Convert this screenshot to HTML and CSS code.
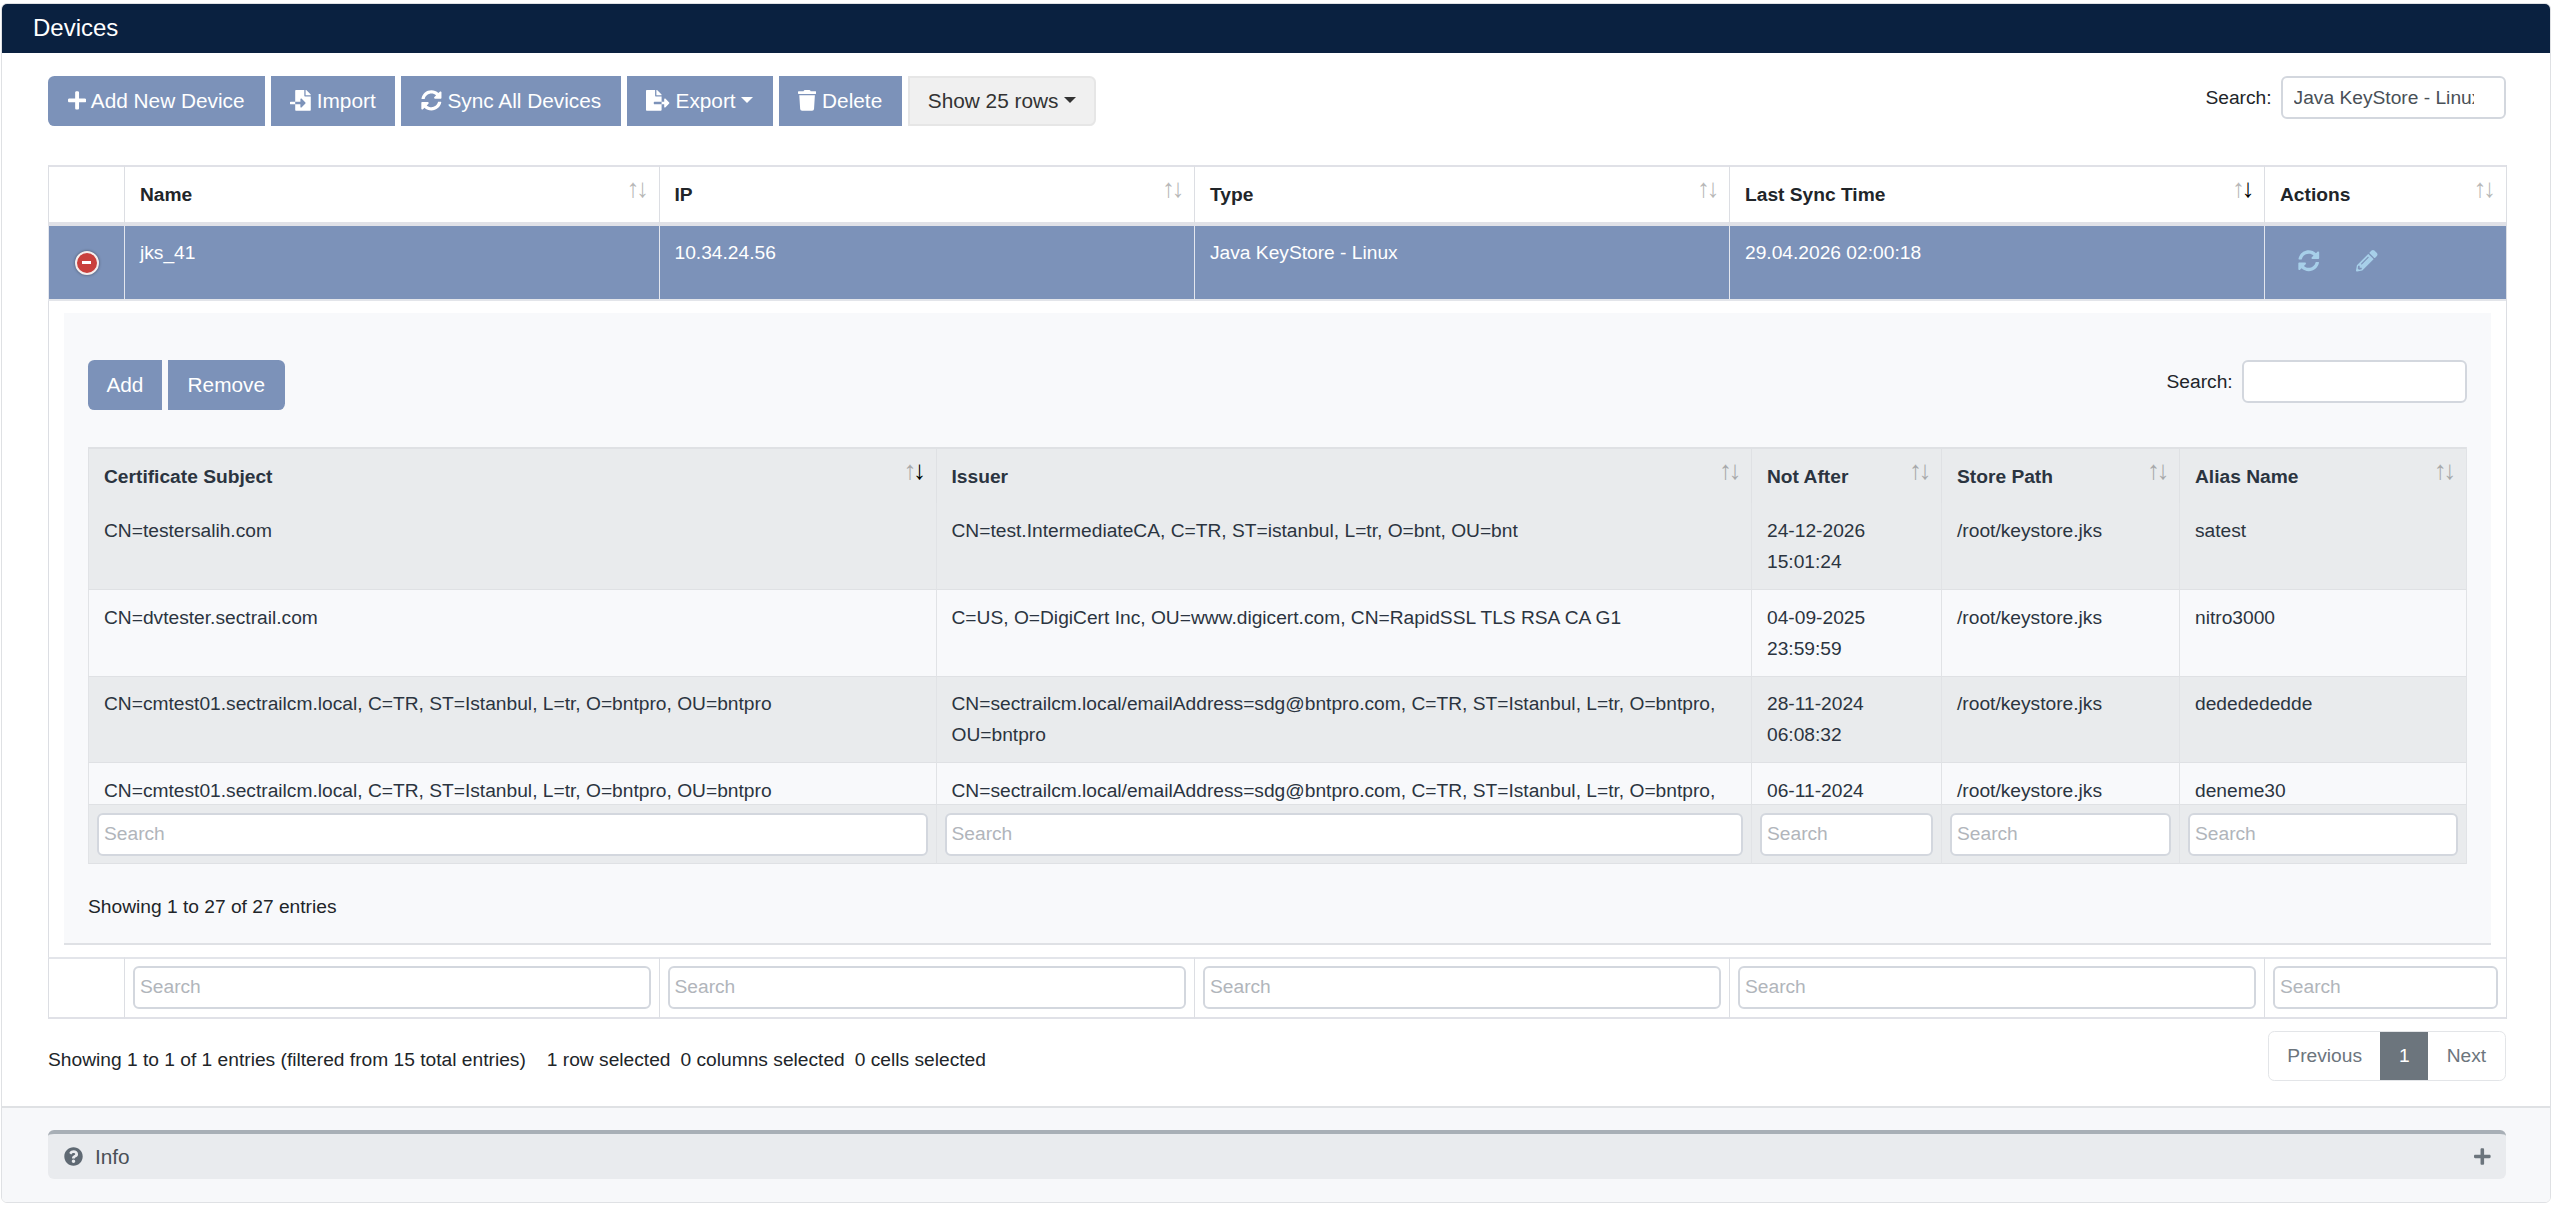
FILE: index.html
```html
<!DOCTYPE html>
<html lang="en">
<head>
    <meta charset="UTF-8">
    <title>Devices</title>
    <link rel="stylesheet" href="styles.css">
</head>
<body>
    <svg class="sprite" aria-hidden="true">
        <defs>
            <path id="i-plus" d="M416 208H272V64c0-17.670-14.330-32-32-32h-32c-17.670 0-32 14.330-32 32v144H32c-17.670 0-32 14.330-32 32v32c0 17.670 14.330 32 32 32h144v144c0 17.670 14.330 32 32 32h32c17.670 0 32-14.330 32-32V304h144c17.670 0 32-14.330 32-32v-32c0-17.670-14.330-32-32-32z"/>
            <path id="i-import" d="M16 288c-8.800 0-16 7.200-16 16v32c0 8.800 7.200 16 16 16h112v-64zm489-183L407.100 7c-4.500-4.500-10.600-7-17-7H384v128h128v-6.100c0-6.300-2.500-12.400-7-16.900zm-153 31V0H152c-13.300 0-24 10.700-24 24v264h128v-65.200c0-14.300 17.300-21.400 27.400-11.300L379 308c6.600 6.700 6.600 17.400 0 24l-95.700 96.400c-10.100 10.100-27.400 3-27.400-11.300V352H128v136c0 13.300 10.700 24 24 24h336c13.300 0 24-10.700 24-24V160H376c-13.200 0-24-10.800-24-24z"/>
            <path id="i-export" d="M384 121.900c0-6.300-2.500-12.400-7-16.900L279.100 7c-4.500-4.500-10.600-7-17-7H256v128h128zM571 308l-95.700-96.400c-10.100-10.100-27.400-3-27.400 11.300V288h-64v64h64v65.200c0 14.300 17.300 21.400 27.400 11.300L571 332c6.600-6.600 6.600-17.400 0-24zm-379 28v-32c0-8.800 7.200-16 16-16h176V160H248c-13.200 0-24-10.800-24-24V0H24C10.700 0 0 10.700 0 24v464c0 13.300 10.700 24 24 24h336c13.300 0 24-10.700 24-24V352H208c-8.800 0-16-7.200-16-16z"/>
            <path id="i-sync" d="M370.720 133.280C339.458 104.008 298.888 87.962 255.848 88c-77.458.068-144.328 53.178-162.791 126.850-1.344 5.363-6.122 9.150-11.651 9.150H24.103c-7.498 0-13.194-6.807-11.807-14.176C33.933 94.924 134.813 8 256 8c66.448 0 126.791 26.136 171.315 68.685L463.030 40.970C478.149 25.851 504 36.559 504 57.941V192c0 13.255-10.745 24-24 24H345.941c-21.382 0-32.090-25.851-16.971-40.971l41.750-41.749zM32 296h134.059c21.382 0 32.090 25.851 16.971 40.971l-41.750 41.750c31.262 29.273 71.835 45.319 114.876 45.280 77.418-.07 144.315-53.144 162.787-126.849 1.344-5.363 6.122-9.150 11.651-9.150h57.304c7.498 0 13.194 6.807 11.807 14.176C478.067 417.076 377.187 504 256 504c-66.448 0-126.791-26.136-171.315-68.685L48.970 471.030C33.851 486.149 8 475.441 8 454.059V320c0-13.255 10.745-24 24-24z"/>
            <path id="i-trash" d="M432 32H312l-9.400-18.700A24 24 0 0 0 281.100 0H166.800a23.720 23.720 0 0 0-21.400 13.300L136 32H16A16 16 0 0 0 0 48v32a16 16 0 0 0 16 16h416a16 16 0 0 0 16-16V48a16 16 0 0 0-16-16zM53.200 467a48 48 0 0 0 47.900 45h245.800a48 48 0 0 0 47.900-45L416 128H32z"/>
            <path id="i-pencil" d="M497.900 142.100l-46.100 46.100c-4.700 4.700-12.300 4.700-17 0l-111-111c-4.700-4.700-4.700-12.300 0-17l46.100-46.100c18.700-18.700 49.100-18.700 67.900 0l60.100 60.100c18.800 18.700 18.800 49.100 0 67.900zM284.200 99.800L21.600 362.400.4 483.900c-2.900 16.400 11.400 30.600 27.800 27.800l121.500-21.300 262.600-262.600c4.700-4.700 4.700-12.300 0-17l-111-111c-4.800-4.700-12.400-4.700-17.100 0zM124.100 339.900c-5.500-5.500-5.500-14.300 0-19.800l154-154c5.500-5.500 14.300-5.500 19.800 0s5.500 14.300 0 19.800l-154 154c-5.500 5.500-14.300 5.500-19.800 0zM88 424h48v36.300l-64.500 11.300-31.100-31.100L51.700 376H88v48z"/>
            <path id="i-question" d="M504 256c0 136.997-111.043 248-248 248S8 392.997 8 256C8 119.083 119.043 8 256 8s248 111.083 248 248zM262.655 90c-54.497 0-89.255 22.957-116.549 63.758-3.536 5.286-2.353 12.415 2.715 16.258l34.699 26.310c5.205 3.947 12.621 3.008 16.665-2.122 17.864-22.658 30.113-35.797 57.303-35.797 20.429 0 45.698 13.148 45.698 32.958 0 14.976-12.363 22.667-32.534 33.976C247.128 238.528 216 254.941 216 296v4c0 6.627 5.373 12 12 12h56c6.627 0 12-5.373 12-12v-1.333c0-28.462 83.186-29.647 83.186-106.667 0-58.002-60.165-102-116.531-102zM256 338c-25.365 0-46 20.635-46 46 0 25.364 20.635 46 46 46s46-20.636 46-46c0-25.365-20.635-46-46-46z"/>
        </defs>
    </svg>

    <div class="card">
        <div class="card-header">Devices</div>

        <div class="card-body">
            <div class="toolbar">
                <div class="btn-group">
                    <button class="btn btn-primary first"><svg class="icon" viewBox="0 0 448 512"><use href="#i-plus"/></svg> Add New Device</button>
                    <button class="btn btn-primary"><svg class="icon" viewBox="0 0 512 512"><use href="#i-import"/></svg> Import</button>
                    <button class="btn btn-primary"><svg class="icon" viewBox="0 0 512 512"><use href="#i-sync"/></svg> Sync All Devices</button>
                    <button class="btn btn-primary caret"><svg class="icon" viewBox="0 0 576 512"><use href="#i-export"/></svg> Export</button>
                    <button class="btn btn-primary"><svg class="icon" viewBox="0 0 448 512"><use href="#i-trash"/></svg> Delete</button>
                    <button class="btn btn-light last caret">Show 25 rows</button>
                </div>
                <label class="search">Search: <input class="search-input" type="text" value="Java KeyStore - Linux"></label>
            </div>

            <table class="main-table">
                <colgroup>
                    <col class="m1"><col class="m2"><col class="m3"><col class="m4"><col class="m5"><col class="m6">
                </colgroup>
                <thead>
                    <tr>
                        <th></th>
                        <th class="sort">Name</th>
                        <th class="sort">IP</th>
                        <th class="sort">Type</th>
                        <th class="sort sort-desc">Last Sync Time</th>
                        <th class="sort">Actions</th>
                    </tr>
                </thead>
                <tbody>
                    <tr class="selected">
                        <td class="control"><span class="remove-btn"></span></td>
                        <td>jks_41</td>
                        <td>10.34.24.56</td>
                        <td>Java KeyStore - Linux</td>
                        <td>29.04.2026 02:00:18</td>
                        <td class="actions">
                            <svg class="icon" viewBox="0 0 512 512"><use href="#i-sync"/></svg>
                            <svg class="icon" viewBox="0 0 512 512"><use href="#i-pencil"/></svg>
                        </td>
                    </tr>
                    <tr class="child-row">
                        <td colspan="6">
                            <div class="child-panel">
                                <div class="toolbar child-toolbar">
                                    <div class="btn-group">
                                        <button class="btn btn-primary first">Add</button>
                                        <button class="btn btn-primary last">Remove</button>
                                    </div>
                                    <label class="search">Search: <input class="search-input" type="text"></label>
                                </div>

                                <div class="scroll-body">
                                    <table class="child-table">
                                        <colgroup>
                                            <col class="c1"><col class="c2"><col class="c3"><col class="c4"><col class="c5">
                                        </colgroup>
                                        <thead>
                                            <tr>
                                                <th class="sort sort-desc">Certificate Subject</th>
                                                <th class="sort">Issuer</th>
                                                <th class="sort">Not After</th>
                                                <th class="sort">Store Path</th>
                                                <th class="sort">Alias Name</th>
                                            </tr>
                                        </thead>
                                        <tbody>
                                            <tr class="odd">
                                                <td>CN=testersalih.com</td>
                                                <td>CN=test.IntermediateCA, C=TR, ST=istanbul, L=tr, O=bnt, OU=bnt</td>
                                                <td>24-12-2026 15:01:24</td>
                                                <td>/root/keystore.jks</td>
                                                <td>satest</td>
                                            </tr>
                                            <tr>
                                                <td>CN=dvtester.sectrail.com</td>
                                                <td>C=US, O=DigiCert Inc, OU=www.digicert.com, CN=RapidSSL TLS RSA CA G1</td>
                                                <td>04-09-2025 23:59:59</td>
                                                <td>/root/keystore.jks</td>
                                                <td>nitro3000</td>
                                            </tr>
                                            <tr class="odd">
                                                <td>CN=cmtest01.sectrailcm.local, C=TR, ST=Istanbul, L=tr, O=bntpro, OU=bntpro</td>
                                                <td>CN=sectrailcm.local/emailAddress=sdg@bntpro.com, C=TR, ST=Istanbul, L=tr, O=bntpro, OU=bntpro</td>
                                                <td>28-11-2024 06:08:32</td>
                                                <td>/root/keystore.jks</td>
                                                <td>dededededde</td>
                                            </tr>
                                            <tr>
                                                <td>CN=cmtest01.sectrailcm.local, C=TR, ST=Istanbul, L=tr, O=bntpro, OU=bntpro</td>
                                                <td>CN=sectrailcm.local/emailAddress=sdg@bntpro.com, C=TR, ST=Istanbul, L=tr, O=bntpro, OU=bntpro</td>
                                                <td>06-11-2024</td>
                                                <td>/root/keystore.jks</td>
                                                <td>deneme30</td>
                                            </tr>
                                        </tbody>
                                    </table>
                                </div>

                                <table class="child-table child-filters">
                                    <colgroup>
                                        <col class="c1"><col class="c2"><col class="c3"><col class="c4"><col class="c5">
                                    </colgroup>
                                    <tfoot>
                                        <tr>
                                            <td><input class="filter-input" placeholder="Search"></td>
                                            <td><input class="filter-input" placeholder="Search"></td>
                                            <td><input class="filter-input" placeholder="Search"></td>
                                            <td><input class="filter-input" placeholder="Search"></td>
                                            <td><input class="filter-input" placeholder="Search"></td>
                                        </tr>
                                    </tfoot>
                                </table>

                                <div class="child-info">Showing 1 to 27 of 27 entries</div>
                            </div>
                        </td>
                    </tr>
                </tbody>
                <tfoot>
                    <tr>
                        <td></td>
                        <td><input class="filter-input" placeholder="Search"></td>
                        <td><input class="filter-input" placeholder="Search"></td>
                        <td><input class="filter-input" placeholder="Search"></td>
                        <td><input class="filter-input" placeholder="Search"></td>
                        <td><input class="filter-input" placeholder="Search"></td>
                    </tr>
                </tfoot>
            </table>

            <div class="table-footer">
                <div class="table-info">Showing 1 to 1 of 1 entries (filtered from 15 total entries)<span class="select-info">1 row selected</span><span class="select-item">0 columns selected</span><span class="select-item">0 cells selected</span></div>
                <ul class="pagination">
                    <li class="page-item">Previous</li>
                    <li class="page-item active">1</li>
                    <li class="page-item">Next</li>
                </ul>
            </div>
        </div>

        <div class="card-footer">
            <div class="info-panel">
                <svg class="icon info-icon" viewBox="0 0 512 512"><use href="#i-question"/></svg>
                <span class="info-title">Info</span>
                <svg class="icon info-plus" viewBox="0 0 448 512"><use href="#i-plus"/></svg>
            </div>
        </div>
    </div>
</body>
</html>
```

FILE: styles.css
```css
* {
    box-sizing: border-box;
}
body {
    margin: 3px 5px 0 1px;
    font-family: "Liberation Sans", Arial, sans-serif;
    font-size: 19.2px;
    line-height: 1.6;
    color: #212529;
    background: #fff;
    overflow: hidden;
}
.sprite {
    position: absolute;
    width: 0;
    height: 0;
}
.icon {
    height: 1em;
    width: auto;
    fill: currentColor;
    vertical-align: -0.125em;
}

/* card */
.card {
    height: 1200px;
    border: 1px solid #dfe1e4;
    border-radius: 6px;
    overflow: hidden;
    display: flex;
    flex-direction: column;
}
.card-header {
    height: 49px;
    flex: none;
    padding: 0 31px;
    display: flex;
    align-items: center;
    font-size: 24px;
    color: #fff;
    background: #0a2140;
}
.card-body {
    height: 1053px;
    flex: none;
    padding: 23px 44.4px 0 46px;
}
.card-footer {
    flex: 1;
    padding: 22px 44.4px 0 46px;
    background: #f7f8fa;
    border-top: 2px solid #dfe1e4;
}

/* toolbars */
.toolbar {
    display: flex;
    justify-content: space-between;
    align-items: flex-start;
    margin-bottom: 39px;
}
.btn-group {
    display: flex;
    gap: 6px;
}
.btn {
    height: 50px;
    padding: 0 19.6px;
    border: none;
    font-family: inherit;
    font-size: 20.8px;
    line-height: 1.5;
    white-space: nowrap;
}
.btn-primary {
    color: #fff;
    background: #7c92b9;
}
.btn-primary.first {
    padding: 0 20px;
}
.child-toolbar .btn-primary.first {
    padding: 0 18.4px;
}
.child-toolbar .btn-primary.last {
    padding: 0 19.8px;
}
.btn-light {
    padding: 0 18px;
    color: #333;
    background: #f0f0f0;
    border: 2px solid #e6e6e6;
}
.first {
    border-radius: 6.4px 0 0 6.4px;
}
.last {
    border-radius: 0 6.4px 6.4px 0;
}
.caret::after {
    content: "";
    display: inline-block;
    margin-left: 0.255em;
    vertical-align: 0.255em;
    border-top: 0.3em solid;
    border-right: 0.3em solid transparent;
    border-left: 0.3em solid transparent;
}
.search {
    display: flex;
    align-items: flex-start;
    gap: 9px;
    line-height: 44px;
}
.search-input {
    width: 225px;
    height: 43px;
    padding: 0 30px 0 11px;
    border: 2px solid #d3d7de;
    border-radius: 6px;
    background: #fff;
    font-family: inherit;
    font-size: 19.2px;
    color: #495057;
}
.filter-input {
    display: block;
    width: 100%;
    height: 43px;
    padding: 0 5px;
    border: 2px solid #d3d7de;
    border-radius: 6px;
    background: #fff;
    font-family: inherit;
    font-size: 19.2px;
}
.filter-input::placeholder {
    color: #b1b5bb;
    opacity: 1;
}

/* main table */
table {
    width: 100%;
    table-layout: fixed;
    border-collapse: separate;
    border-spacing: 0;
}
.m1 { width: 76px; }
.m2 { width: 534.5px; }
.m3 { width: 535.5px; }
.m4 { width: 535px; }
.m5 { width: 535px; }
.m6 { width: 241.6px; }
.main-table {
    border-right: 1px solid #dcdee3;
}
.main-table > thead th {
    position: relative;
    padding: 13px 15px 11px;
    text-align: left;
    font-weight: 700;
    border-top: 2px solid #e0e1e7;
    border-left: 1px solid #dcdee3;
    border-bottom: 4px solid #e0e1e7;
}
.main-table > tbody > .selected > td {
    height: 75px;
    padding: 12px 15px;
    vertical-align: top;
    color: #fff;
    background: #7c92b9;
    border-left: 1px solid #e3e6ee;
    border-bottom: 2px solid #e3e5ea;
}
.main-table > tbody > .selected > .control {
    padding: 0;
    vertical-align: middle;
    text-align: center;
}
.remove-btn {
    display: block;
    position: relative;
    width: 24px;
    height: 24px;
    margin: 2px auto 0;
    border: 2.5px solid #f4eeee;
    border-radius: 50%;
    background: #c9403d;
    box-shadow: 0 0 3px rgba(0, 0, 0, 0.45);
}
.remove-btn::after {
    content: "";
    position: absolute;
    left: 5px;
    top: 7.5px;
    width: 9px;
    height: 3px;
    background: #fff;
}
.main-table > tbody > .selected > .actions {
    padding: 0 0 0 33px;
    vertical-align: middle;
    color: #a7cfe9;
    font-size: 21.5px;
}
.actions .icon {
    margin-right: 31px;
}
.main-table > tbody > .child-row > td {
    padding: 12px 14.6px 12px 15px;
    border-left: 1px solid #dcdee3;
}
.main-table > tfoot td {
    padding: 7px 8px 8px;
    border-top: 2px solid #e3e5ea;
    border-left: 1px solid #dcdee3;
    border-bottom: 2px solid #e0e1e7;
}

/* sort arrows */
.sort::before,
.sort::after {
    position: absolute;
    top: 6px;
    font-size: 26px;
    font-weight: 400;
    line-height: 30px;
    color: #000;
    opacity: 0.28;
}
.sort::before {
    content: "\2191";
    right: 19px;
}
.sort::after {
    content: "\2193";
    right: 9.5px;
}
.sort-desc::after {
    opacity: 1;
}

/* child panel */
.child-panel {
    height: 632px;
    padding: 47px 24.3px 0 24px;
    background: #f8f9fb;
    border-bottom: 2px solid #dfe1e5;
}
.child-toolbar {
    margin-bottom: 37px;
}
.scroll-body {
    height: 357px;
    overflow: hidden;
}
.c1 { width: 847.5px; }
.c2 { width: 815.5px; }
.c3 { width: 190px; }
.c4 { width: 238px; }
.c5 { width: 286.7px; }
.child-table {
    border-right: 1px solid #e1e3e6;
    color: #2b3440;
}
.child-table th {
    position: relative;
    padding: 13px 15px 11px;
    text-align: left;
    font-weight: 700;
    background: #e9ebed;
    border-top: 2px solid #dfe1e4;
    border-left: 1px solid #dfe1e4;
}
.child-table tbody td {
    height: 86.6px;
    padding: 12.8px 15px 10.9px;
    vertical-align: top;
    border-left: 1px solid #e1e3e6;
    border-bottom: 1.5px solid #dfe1e4;
}
.child-table .odd td {
    background: #e9ebed;
}
.child-filters td {
    padding: 8px 8px 7px;
    background: #e9ebed;
    border-top: 1px solid #dfe1e4;
    border-left: 1px solid #e1e3e6;
    border-bottom: 1px solid #dfe1e4;
}
.child-info {
    margin-top: 28px;
}

/* footer of the table */
.table-footer {
    display: flex;
    justify-content: space-between;
    align-items: flex-start;
}
.table-info {
    margin-top: 26px;
}
.select-info {
    margin-left: 21px;
}
.select-item {
    margin-left: 10px;
}
.pagination {
    display: flex;
    height: 50px;
    margin: 12px 0 0;
    padding: 0;
    list-style: none;
    border: 1px solid #e3e5e8;
    border-radius: 6.4px;
    color: #6c757d;
    overflow: hidden;
}
.page-item {
    padding: 0 18.5px;
    line-height: 48px;
}
.page-item.active {
    color: #fff;
    background: #6c757d;
}

/* info panel */
.info-panel {
    height: 49px;
    display: flex;
    align-items: center;
    padding: 0 15px 0 16px;
    border-top: 4px solid #a8afb6;
    border-radius: 6px;
    background: #e9ebee;
    color: #495057;
    font-size: 20.8px;
}
.info-icon {
    font-size: 19px;
    color: #5f6973;
}
.info-title {
    margin-left: 12px;
}
.info-plus {
    margin-left: auto;
    font-size: 19px;
    color: #6c757d;
}
```
